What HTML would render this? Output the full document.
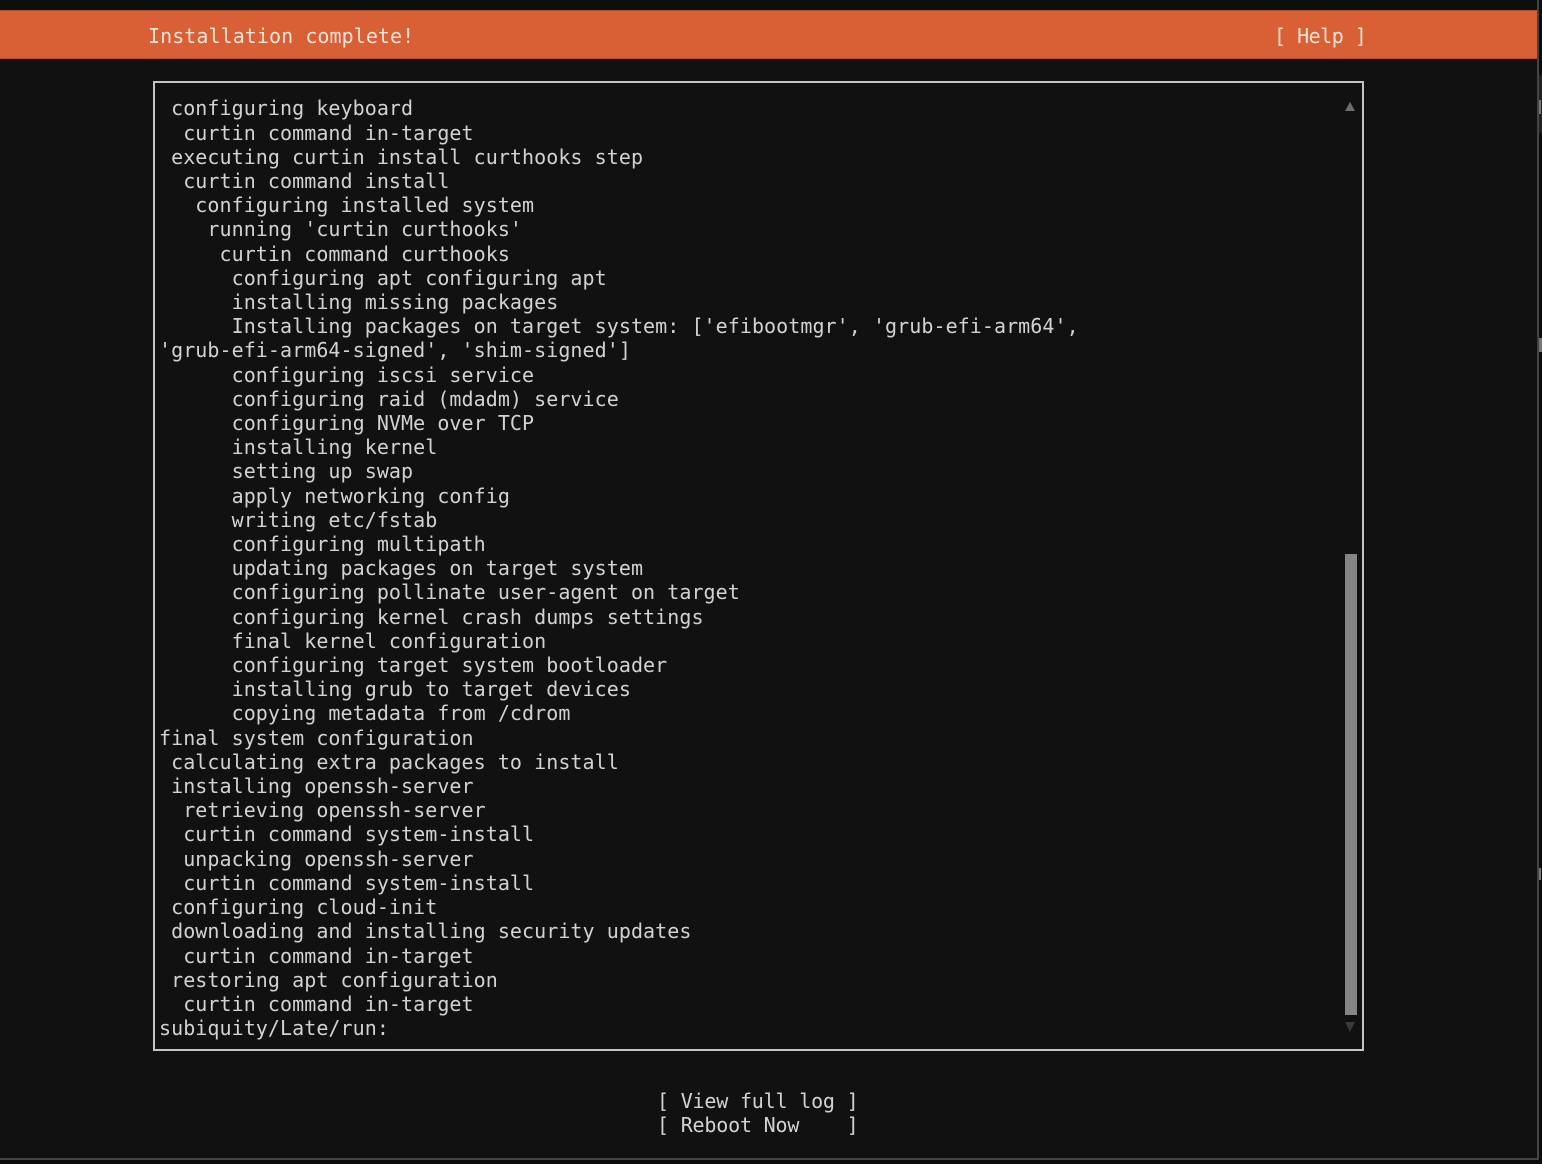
<!DOCTYPE html>
<html>
<head>
<meta charset="utf-8">
<style>
html,body{margin:0;padding:0;background:#111;}
body{width:1542px;height:1164px;position:relative;overflow:hidden;font-family:"DejaVu Sans Mono","Liberation Mono",monospace;font-size:20px;color:#d2d2d2;}
pre{margin:0;position:absolute;font:inherit;letter-spacing:0.06px;white-space:pre;}
#bar{position:absolute;left:0;top:10px;width:1537px;height:49px;background:#d95f35;border-top:1px solid #b5502e;border-bottom:1px solid #b5502e;box-sizing:border-box;}
#box{position:absolute;left:153px;top:81px;width:1211px;height:970px;box-sizing:border-box;border:2px solid #c4c4c4;}
#log{left:159px;top:96.4px;line-height:24.21px;}
#thumb{position:absolute;left:1345px;top:554px;width:12px;height:461px;background:#858585;}
.a{position:absolute;width:0;height:0;border-left:5px solid transparent;border-right:5px solid transparent;}
</style>
</head>
<body>
<div style="position:absolute;left:0;top:0;width:1542px;height:10px;background:#0e0e0e"></div>
<div id="bar"></div>
<pre style="left:148px;top:23px;line-height:26px;color:#f6e4dc">Installation complete!</pre>
<pre style="left:1274px;top:23px;line-height:26px;color:#f6e4dc;letter-spacing:-0.5px">[ Help ]</pre>
<div id="box"></div>
<pre id="log"> configuring keyboard
  curtin command in-target
 executing curtin install curthooks step
  curtin command install
   configuring installed system
    running 'curtin curthooks'
     curtin command curthooks
      configuring apt configuring apt
      installing missing packages
      Installing packages on target system: ['efibootmgr', 'grub-efi-arm64',
'grub-efi-arm64-signed', 'shim-signed']
      configuring iscsi service
      configuring raid (mdadm) service
      configuring NVMe over TCP
      installing kernel
      setting up swap
      apply networking config
      writing etc/fstab
      configuring multipath
      updating packages on target system
      configuring pollinate user-agent on target
      configuring kernel crash dumps settings
      final kernel configuration
      configuring target system bootloader
      installing grub to target devices
      copying metadata from /cdrom
final system configuration
 calculating extra packages to install
 installing openssh-server
  retrieving openssh-server
  curtin command system-install
  unpacking openssh-server
  curtin command system-install
 configuring cloud-init
 downloading and installing security updates
  curtin command in-target
 restoring apt configuration
  curtin command in-target
subiquity/Late/run:</pre>
<div class="a" style="left:1345px;top:102px;border-bottom:9px solid #6e6e6e"></div>
<div id="thumb"></div>
<div class="a" style="left:1345px;top:1022px;border-top:10px solid #3a3a3a"></div>
<pre style="left:657px;top:1089px;line-height:24.4px;letter-spacing:-0.19px">[ View full log ]
[ Reboot Now    ]</pre>
<div style="position:absolute;left:1537px;top:0;width:2px;height:1160px;background:#444"></div>
<div style="position:absolute;left:0;top:1158px;width:1539px;height:2px;background:#444"></div>
<div style="position:absolute;left:0;top:1160px;width:1542px;height:4px;background:#0a0a0a"></div>
<div style="position:absolute;left:1539px;top:0;width:3px;height:1164px;background:#0d0d0d"></div>
<div style="position:absolute;left:1539px;top:75px;width:3px;height:58px;background:#222"></div>
<div style="position:absolute;left:1539px;top:100px;width:2px;height:14px;background:#777"></div>
<div style="position:absolute;left:1539px;top:338px;width:3px;height:14px;background:#777"></div>
<div style="position:absolute;left:1539px;top:868px;width:2px;height:12px;background:#777"></div>
</body>
</html>
